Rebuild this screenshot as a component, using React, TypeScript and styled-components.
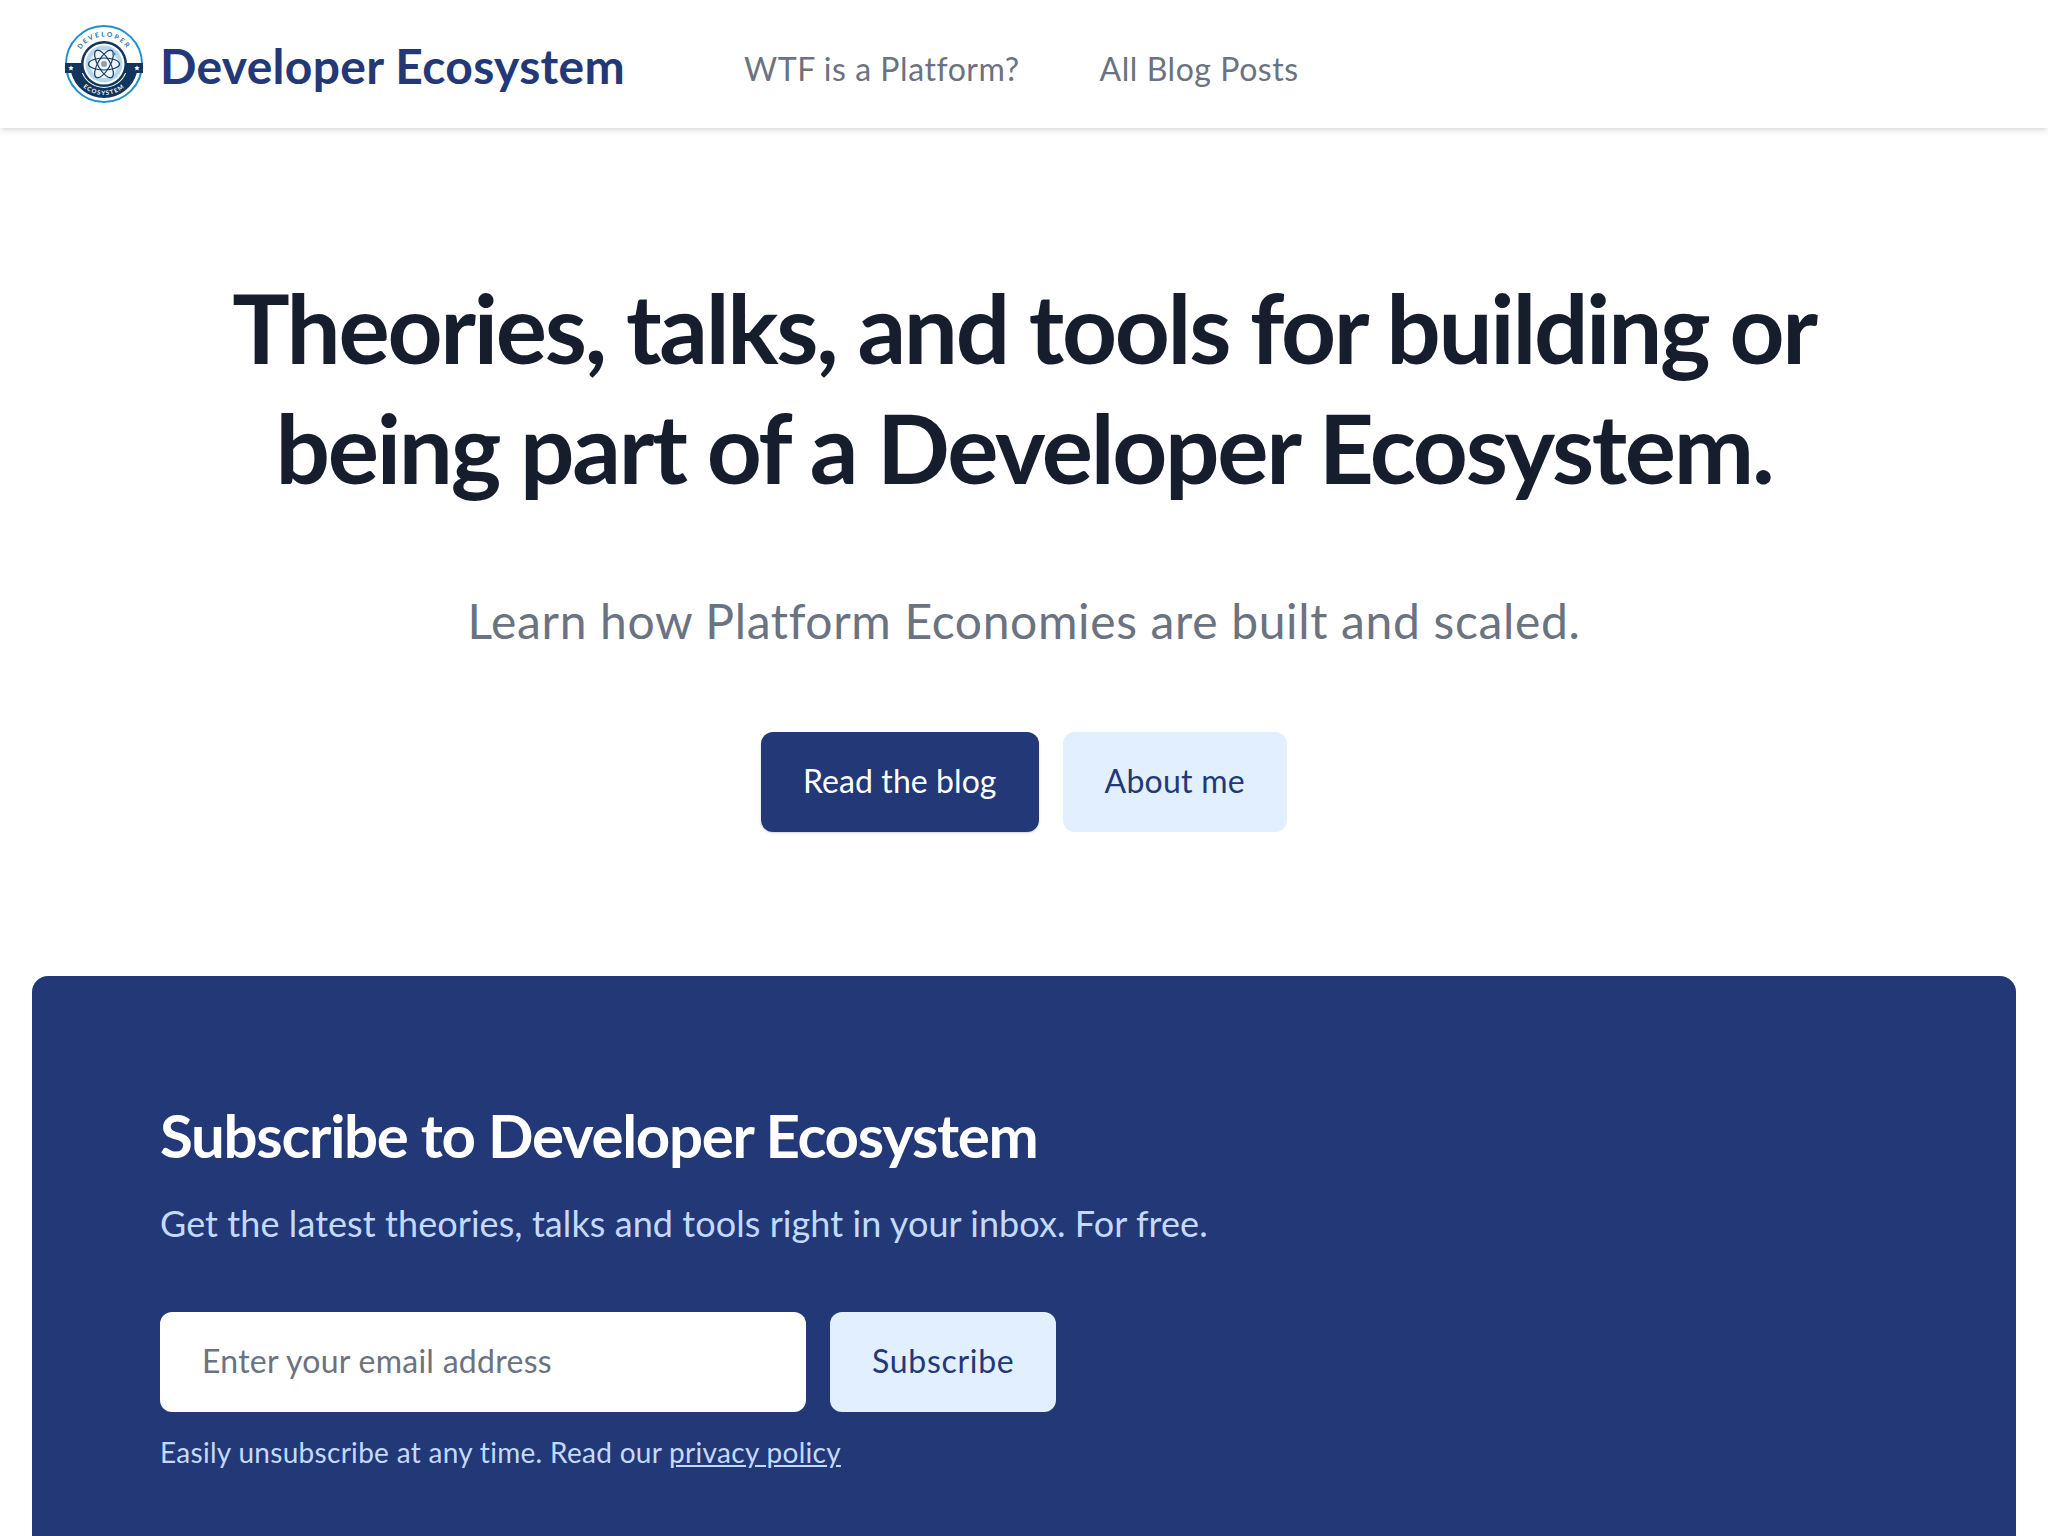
import React from "react";
import styled, { createGlobalStyle } from "styled-components";

const Global = createGlobalStyle`
  html, body { margin: 0; padding: 0; background: #fff; }
  body { font-family: "Lato", "Noto Sans", sans-serif; font-variant-ligatures: none; overflow: hidden; }
  * { box-sizing: border-box; }
`;
const Page = styled.div`
  height: 1536px; overflow: hidden; display: flex; flex-direction: column;
`;
const Header = styled.header`
  height: 128px; flex: none; display: flex; align-items: center; padding: 0 64px;
  background: #fff; box-shadow: 0 4px 6px -1px rgba(0,0,0,.1), 0 2px 4px -1px rgba(0,0,0,.06);
`;
const Brand = styled.a`
  display: flex; align-items: center; gap: 16px; width: 680px;
`;
const BrandName = styled.span`
  font-size: 48px; line-height: 54px; padding-top: 3px; font-weight: 700; color: #233876; letter-spacing: 0.3px; white-space: nowrap;
`;
const Nav = styled.nav`
  display: flex; gap: 80px; padding-top: 9px;
`;
const NavLink = styled.a`
  font-size: 32px; color: #6b7280; white-space: nowrap; letter-spacing: 0.55px;
`;
const Hero = styled.section`
  display: flex; flex-direction: column; align-items: center; padding-top: 139px; height: 848px; flex: none;
`;
const Title = styled.h1`
  margin: 0; font-size: 96px; line-height: 120px; font-weight: 700; color: #161e2e;
  letter-spacing: -2.3px; text-align: center;
`;
const Lead = styled.p`
  margin: 78px 0 0; font-size: 48px; line-height: 72px; color: #6b7280; letter-spacing: 0.65px;
`;
const Actions = styled.div`
  display: flex; gap: 24px; margin-top: 75px;
`;
const Button = styled.a<{ $primary?: boolean }>`
  height: 100px; display: flex; align-items: center; padding: 0 42px 3px; font-size: 32px; border-radius: 12px;
  letter-spacing: ${p => (p.$primary ? "0.08px" : "0.25px")};
  background: ${p => (p.$primary ? "#233876" : "#e1effe")};
  color: ${p => (p.$primary ? "#fff" : "#233876")};
  box-shadow: ${p => (p.$primary ? "0 1px 3px rgba(0,0,0,.12), 0 1px 2px rgba(0,0,0,.06)" : "none")};
`;
const Panel = styled.section`
  flex: 1; margin: 0 32px; background: #233876; border-radius: 16px 16px 0 0; padding: 127px 128px 0;
`;
const PanelTitle = styled.h2`
  margin: 0; font-size: 60px; line-height: 64px; font-weight: 700; color: #fff; letter-spacing: -1.3px;
`;
const PanelText = styled.p`
  margin: 32px 0 0; font-size: 36px; line-height: 48px; color: #c3dafe; letter-spacing: 0.07px;
`;
const Form = styled.form`
  display: flex; gap: 24px; margin-top: 65px;
`;
const EmailInput = styled.input`
  width: 646px; height: 100px; border: 0; border-radius: 12px; padding: 0 42px 3px; background: #fff;
  font: 32px "Lato", sans-serif; color: #161e2e; letter-spacing: 0.27px;
  &::placeholder { color: #6b7280; opacity: 1; }
`;
const SubscribeButton = styled.button`
  height: 100px; border: 0; border-radius: 12px; padding: 0 42px 3px; background: #e1effe; color: #233876;
  font: 32px "Lato", sans-serif; letter-spacing: 0.7px;
`;
const Fine = styled.p`
  margin: 20px 0 0; font-size: 28px; line-height: 40px; color: #c3dafe; letter-spacing: 0.3px;
`;
const FineLink = styled.a`
  color: #c3dafe; text-decoration: underline;
`;

const Logo = () => (
  <svg width="80" height="80" viewBox="0 -1 80 80" role="img" aria-label="Developer Ecosystem logo">
    <defs>
      <path id="arcTop" d="M12.5 39a27.5 27.5 0 0 1 55 0" />
      <path id="arcBottom" d="M9 39a31 31 0 0 0 62 0" />
    </defs>
    <circle cx="40" cy="39" r="38" fill="#fff" stroke="#1f8fd0" strokeWidth="2" />
    <path d="M7.2 48A34 34 0 0 0 72.8 48L62.2 48A24 24 0 0 1 17.8 48Z" fill="#12355c" />
    <path d="M1 38H79V48H1z" fill="#12355c" />
    <text fontSize="6.6" fontWeight="700" letterSpacing="2" fill="#1f6fa8" textAnchor="middle" fontFamily="Lato, sans-serif">
      <textPath href="#arcTop" startOffset="50%">DEVELOPER</textPath>
    </text>
    <text fontSize="6" fontWeight="700" letterSpacing="1.2" fill="#fff" textAnchor="middle" fontFamily="Lato, sans-serif">
      <textPath href="#arcBottom" startOffset="50%">ECOSYSTEM</textPath>
    </text>
    <path d="M7 40.4l.8 1.7 1.9.2-1.4 1.3.4 1.9-1.7-1-1.7 1 .4-1.9-1.4-1.3 1.9-.2zM73 40.4l.8 1.7 1.9.2-1.4 1.3.4 1.9-1.7-1-1.7 1 .4-1.9-1.4-1.3 1.9-.2z" fill="#fff" />
    <circle cx="40" cy="39" r="23" fill="#12355c" />
    <circle cx="40" cy="39" r="20.5" fill="#fff" />
    <circle cx="40" cy="39" r="18.5" fill="#b5d8ec" />
    <circle cx="40" cy="39" r="14" fill="#eef6fb" />
    <g fill="none" stroke="#1b3a5e" strokeWidth="1.2">
      <ellipse cx="40" cy="39" rx="15.5" ry="6" transform="rotate(60 40 39)" />
      <ellipse cx="40" cy="39" rx="15.5" ry="6" transform="rotate(-60 40 39)" />
      <ellipse cx="40" cy="39" rx="15.5" ry="6" />
    </g>
    <circle cx="40" cy="39" r="3" fill="#8aa0b5" />
    <circle cx="50" cy="29" r="1.6" fill="#1f8fd0" />
  </svg>
);

export default function App() {
  return (
    <Page>
      <Global />
      <Header>
        <Brand><Logo /><BrandName>Developer Ecosystem</BrandName></Brand>
        <Nav>
          <NavLink>WTF is a Platform?</NavLink>
          <NavLink>All Blog Posts</NavLink>
        </Nav>
      </Header>
      <Hero>
        <Title>Theories, talks, and tools for building or<br />being part of a Developer Ecosystem.</Title>
        <Lead>Learn how Platform Economies are built and scaled.</Lead>
        <Actions>
          <Button $primary>Read the blog</Button>
          <Button>About me</Button>
        </Actions>
      </Hero>
      <Panel>
        <PanelTitle>Subscribe to Developer Ecosystem</PanelTitle>
        <PanelText>Get the latest theories, talks and tools right in your inbox. For free.</PanelText>
        <Form onSubmit={e => e.preventDefault()}>
          <EmailInput placeholder="Enter your email address" />
          <SubscribeButton>Subscribe</SubscribeButton>
        </Form>
        <Fine>Easily unsubscribe at any time. Read our <FineLink>privacy policy</FineLink></Fine>
      </Panel>
    </Page>
  );
}
